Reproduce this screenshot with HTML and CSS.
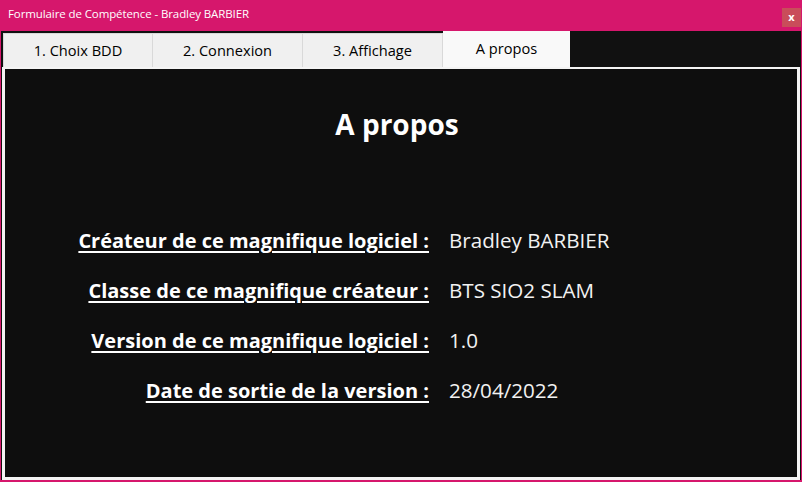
FILE: index.html
```html
<!DOCTYPE html>
<html lang="fr">
<head>
<meta charset="utf-8">
<title>Formulaire de Compétence</title>
<link rel="stylesheet" href="styles.css">
</head>
<body>
<div class="window">
  <div class="titlebar">
    <span class="title">Formulaire de Compétence - Bradley BARBIER</span>
    <span class="close">x</span>
  </div>
  <div class="client">
    <div class="tabs">
      <div class="tab t1">1. Choix BDD</div>
      <div class="tab t2">2. Connexion</div>
      <div class="tab t3">3. Affichage</div>
      <div class="tab active">A propos</div>
    </div>
    <div class="panel">
      <h1 class="heading">A propos</h1>
      <div class="info">
        <div class="label">Créateur de ce magnifique logiciel :</div>
        <div class="value">Bradley BARBIER</div>
        <div class="label">Classe de ce magnifique créateur :</div>
        <div class="value">BTS SIO2 SLAM</div>
        <div class="label">Version de ce magnifique logiciel :</div>
        <div class="value">1.0</div>
        <div class="label">Date de sortie de la version :</div>
        <div class="value">28/04/2022</div>
      </div>
    </div>
  </div>
</div>
</body>
</html>
```
FILE: styles.css
```css
* { box-sizing: border-box; }
html, body { margin: 0; padding: 0; }
body {
  width: 802px;
  height: 482px;
  overflow: hidden;
  font-family: "Open Sans", "Noto Sans", sans-serif;
  background: #d6176c;
}
.window {
  width: 802px;
  height: 482px;
  display: flex;
  flex-direction: column;
  background: #d6176c;
  padding: 0 1px 2px 1px;
}
.titlebar {
  height: 31px;
  display: flex;
  align-items: flex-start;
  justify-content: space-between;
  color: #ffffff;
  flex: none;
}
.title {
  font-size: 11.5px;
  margin: 6px 0 0 7px;
  letter-spacing: -0.1px;
}
.close {
  width: 19px;
  height: 19px;
  margin-top: 8px;
  background: #c94d5a;
  color: #fff;
  font-size: 11px;
  font-weight: bold;
  display: flex;
  align-items: center;
  justify-content: center;
  line-height: 1;
  padding-bottom: 2px;
}
.client {
  flex: 1;
  background: #111111;
  display: flex;
  flex-direction: column;
  padding: 0 0 0 1px;
}
.tabs {
  height: 36px;
  display: flex;
  align-items: flex-end;
  flex: none;
  padding-left: 1px;
}
.tab {
  height: 34px;
  background: #f0f0f0;
  border: 1px solid #d9d9d9;
  border-bottom: none;
  color: #000;
  font-size: 14.6px;
  display: flex;
  align-items: center;
  justify-content: center;
  padding-bottom: 1px;
}
.t1 { width: 150px; }
.t2 { width: 150px; border-left: none; }
.t3 { width: 140px; border-left: none; }
.tab.active {
  width: 127px;
  height: 36px;
  background: #f9f9f9;
  border: none;
  padding-bottom: 3px;
}
.panel {
  flex: 1;
  margin-right: 1px;
  background: #0e0e0e;
  border: 3px solid #f4f4f4;
  border-top-width: 2px;
  display: flex;
  flex-direction: column;
  align-items: center;
  color: #ffffff;
}
.heading {
  margin: 36px 0 0 0;
  font-size: 28px;
  font-weight: bold;
  line-height: 38px;
  position: relative;
  left: -4px;
}
.info {
  margin-top: 83px;
  display: grid;
  grid-template-columns: 424px auto;
  column-gap: 20px;
  row-gap: 21px;
  align-items: baseline;
  align-self: flex-start;
  line-height: 28px;
}
.label {
  text-align: right;
  font-size: 20px;
  font-weight: bold;
  text-decoration: underline;
  text-underline-offset: 3px;
  text-decoration-thickness: 2px;
}
.value {
  font-size: 20.6px;
  line-height: 28px;
  font-weight: normal;
  color: #f2f2f2;
}
```
